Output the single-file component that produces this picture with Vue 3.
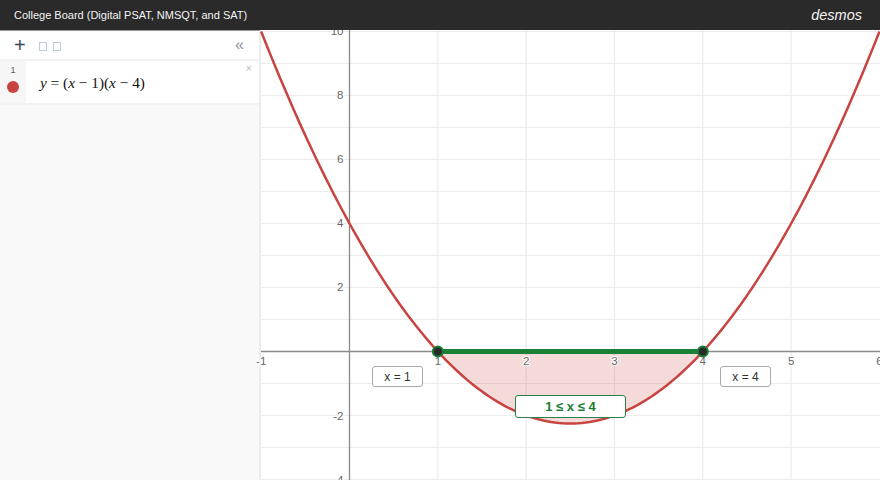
<script setup>
const X0 = 349.5, Y0 = 351.5, UX = 88.33, UY = 32
const px = (u) => X0 + u * UX
const py = (v) => Y0 - v * UY
const f = (u) => (u - 1) * (u - 4)
const sample = (a, b) => {
  const pts = []
  for (let i = 0; i <= 160; i++) {
    const u = a + ((b - a) * i) / 160
    pts.push(`${px(u).toFixed(2)} ${py(f(u)).toFixed(2)}`)
  }
  return pts
}
const curve = 'M' + sample(-1, 6).join('L')
const region = 'M' + sample(1, 4).join('L') + 'Z'
const vLines = [1, 2, 3, 4, 5].map(px)
const hLines = [10, 9, 8, 7, 6, 5, 4, 3, 2, 1, -1, -2, -3, -4].map(py)
const xTicks = [-1, 1, 2, 3, 4, 5, 6]
const yTicks = [10, 8, 6, 4, 2, -2, -4]
</script>

<template>
  <div class="app">
    <header class="topbar">
      <span class="title">College Board (Digital PSAT, NMSQT, and SAT)</span>
      <span class="brand">desmos</span>
    </header>
    <main class="body">
      <aside class="panel">
        <div class="toolbar">
          <span class="plus">+</span>
          <span class="tofu"></span>
          <span class="tofu"></span>
          <span class="collapse">«</span>
        </div>
        <div class="expr">
          <div class="gutter">
            <span class="num">1</span>
            <span class="dot"></span>
          </div>
          <div class="math">
            <i>y</i>&nbsp;=&nbsp;(<i>x</i>&nbsp;−&nbsp;1)(<i>x</i>&nbsp;−&nbsp;4)
          </div>
          <span class="close">×</span>
        </div>
      </aside>
      <section class="graph">
        <svg class="plot" viewBox="261 30 619 450" width="619" height="450">
          <line v-for="x in vLines" :key="'v' + x" :x1="x" :x2="x" y1="30" y2="480" class="grid" />
          <line v-for="y in hLines" :key="'h' + y" x1="261" x2="880" :y1="y" :y2="y" class="grid" />
          <line :x1="X0" :x2="X0" y1="30" y2="480" class="axis" />
          <line x1="261" x2="880" :y1="Y0" :y2="Y0" class="axis" />
          <path :d="region" class="region" />
          <path :d="curve" class="curve" />
          <text v-for="t in xTicks" :key="'x' + t" :x="px(t)" y="364.5" text-anchor="middle" class="tick">{{ t }}</text>
          <text v-for="t in yTicks" :key="'y' + t" :x="X0 - 6" :y="py(t) + (t < 0 ? 4.5 : 3.5)" text-anchor="end" class="tick">{{ t }}</text>
          <line :x1="px(1)" :x2="px(4)" :y1="Y0" :y2="Y0" class="segment" />
          <circle :cx="px(1)" :cy="Y0" r="5" class="pt" />
          <circle :cx="px(4)" :cy="Y0" r="5" class="pt" />
        </svg>
        <span class="tag tag-a">x = 1</span>
        <span class="tag tag-b">x = 4</span>
        <span class="tag tag-c">1 ≤ x ≤ 4</span>
      </section>
    </main>
  </div>
</template>

<style>
html, body { margin: 0; padding: 0; }
</style>

<style scoped>
.app {
  width: 880px;
  height: 480px;
  display: flex;
  flex-direction: column;
  overflow: hidden;
  font-family: "Liberation Sans", Arial, sans-serif;
  background: #fff;
}
.topbar {
  height: 30px;
  flex: none;
  position: relative;
  z-index: 1;
  background: #2a2a2a;
  color: #f4f4f4;
  display: flex;
  align-items: center;
  justify-content: space-between;
  padding: 0 18px 0 14px;
  box-sizing: border-box;
}
.title { font-size: 11px; }
.brand { font-size: 14.5px; font-style: italic; }
.body { flex: 1; display: flex; min-height: 0; }
.panel {
  width: 261px;
  flex: none;
  box-sizing: border-box;
  background: #f9f9f9;
  border-top: 1px solid #999;
  border-right: 2px solid #ececec;
}
.toolbar {
  height: 28px;
  box-sizing: border-box;
  background: #fff;
  display: flex;
  align-items: center;
  padding-left: 14px;
}
.plus {
  font-size: 20px;
  line-height: 20px;
  font-weight: 300;
  color: #3a4452;
  width: 25px;
}
.tofu {
  width: 6px;
  height: 7px;
  border: 1px solid #bccbe0;
  margin-right: 6px;
  margin-top: 2px;
}
.collapse {
  margin-left: auto;
  margin-right: 15px;
  font-size: 16px;
  color: #8a93a0;
  margin-top: -1px;
}
.expr {
  height: 42px;
  display: flex;
  position: relative;
  background: #fff;
  border-top: 2px solid #f2f2f2;
  border-bottom: 2px solid #f2f2f2;
}
.gutter {
  width: 26px;
  background: #f6f6f6;
  display: flex;
  flex-direction: column;
  align-items: center;
  padding-top: 4px;
  box-sizing: border-box;
}
.num { font-size: 9px; line-height: 10px; color: #555; }
.dot {
  width: 12px;
  height: 12px;
  border-radius: 50%;
  background: #c74440;
  margin-top: 6px;
}
.math {
  font-family: "Liberation Serif", "Times New Roman", serif;
  font-size: 15.3px;
  color: #111;
  padding: 13px 0 0 14px;
  white-space: nowrap;
}
.close {
  position: absolute;
  right: 7px;
  top: 1px;
  font-size: 11px;
  color: #bbb;
}
.graph { position: relative; flex: 1; background: #fff; }
.plot { display: block; overflow: visible; }
.grid { stroke: #ececec; stroke-width: 1.2; }
.axis { stroke: #8a8a8a; stroke-width: 1.3; }
.region { fill: #c74440; fill-opacity: 0.2; stroke: none; }
.curve { fill: none; stroke: #c74440; stroke-width: 2.5; }
.tick {
  font-family: "Liberation Sans", Arial, sans-serif;
  font-size: 11.5px;
  fill: #666;
  paint-order: stroke;
  stroke: #fff;
  stroke-width: 2px;
}
.segment { stroke: #1a7f37; stroke-width: 5; }
.pt { fill: #2a2a2a; stroke: #1a7f37; stroke-width: 2; }
.tag {
  position: absolute;
  box-sizing: border-box;
  height: 21px;
  background: #fff;
  border: 1px solid #aaa;
  border-radius: 3px;
  font-size: 12px;
  line-height: 20px;
  text-align: center;
  color: #333;
}
.tag-a { left: 111px; top: 336px; width: 51px; }
.tag-b { left: 459px; top: 336px; width: 51px; }
.tag-c {
  left: 254px;
  top: 365px;
  width: 111px;
  height: 23px;
  line-height: 21px;
  font-size: 13px;
  border-color: #2a8048;
  color: #1c7c38;
  font-weight: bold;
}
</style>
